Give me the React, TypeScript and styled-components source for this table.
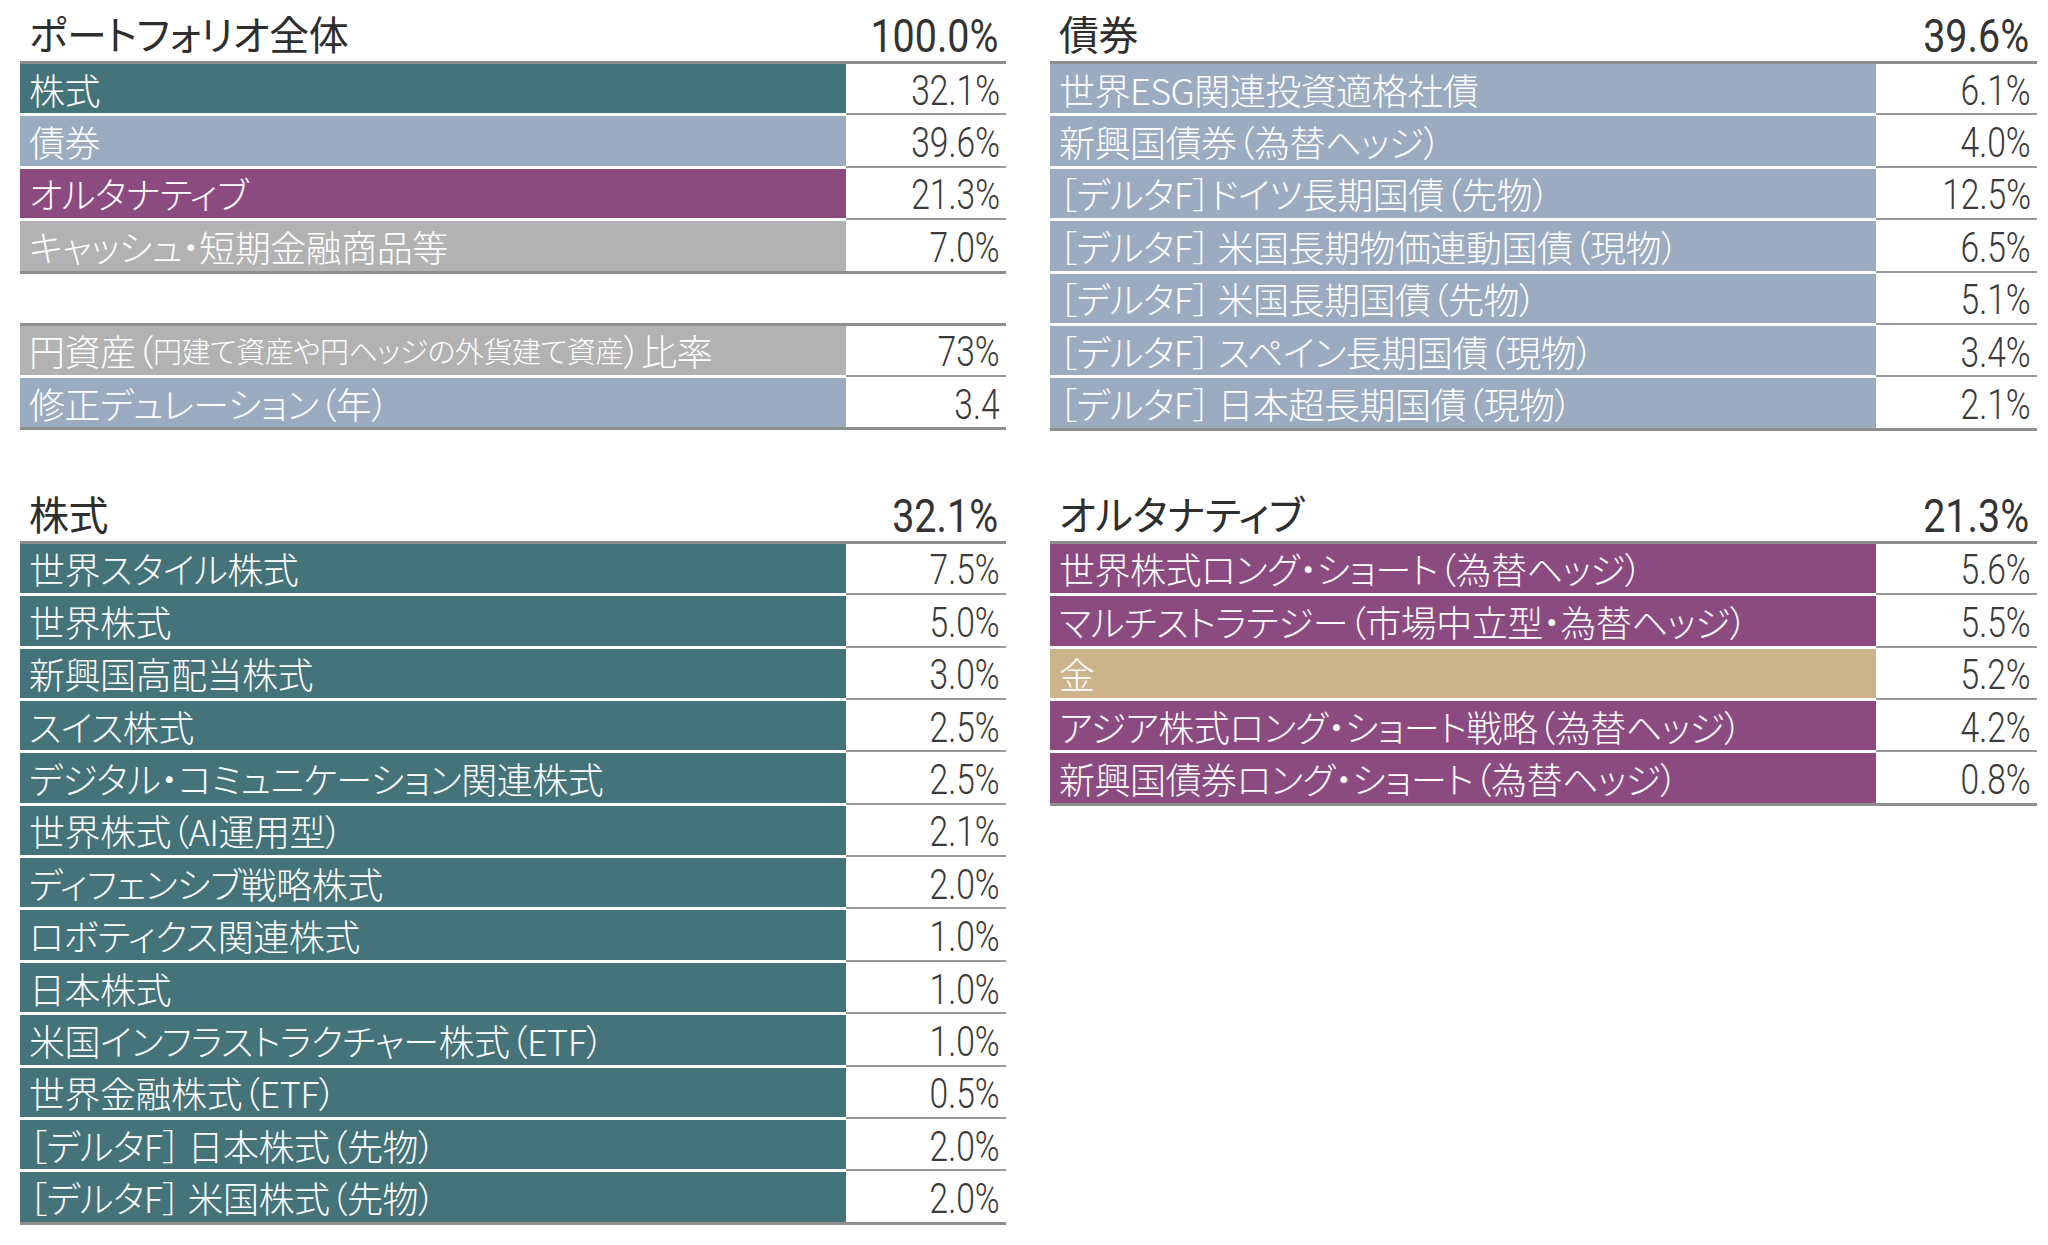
import React from 'react';
import styled, { createGlobalStyle } from 'styled-components';

const GlobalStyle = createGlobalStyle`
  html, body {
    margin: 0;
    padding: 0;
    background: #ffffff;
  }
  body {
    width: 2048px;
    height: 1245px;
    overflow: hidden;
    font-family: "Noto Sans CJK JP", "Noto Sans", sans-serif;
  }
`;

type Tone = 'equity' | 'bond' | 'alt' | 'cash' | 'gold';

const toneColor: Record<Tone, string> = {
  equity: '#44737a',
  bond: '#9bacc1',
  alt: '#8c4b80',
  cash: '#b2b2b2',
  gold: '#cbb48c',
};

type Item = { label: React.ReactNode; value: string; tone: Tone };

const Page = styled.div`
  display: grid;
  grid-template-columns: 986px 987px;
  column-gap: 44px;
  row-gap: 49px;
  padding-left: 20px;
  align-items: start;
`;

const Column = styled.section`
  display: flex;
  flex-direction: column;
`;

const Header = styled.div`
  height: 61px;
  display: flex;
  justify-content: space-between;
  align-items: flex-end;
  border-bottom: 3px solid #8e8e8e;
`;

const Title = styled.div`
  font-size: 40px;
  font-weight: 400;
  line-height: 1;
  color: #2e2e2e;
  padding: 0 0 8px 9px;
  font-feature-settings: "palt";
  letter-spacing: -0.4px;
  white-space: nowrap;
`;

const Num = styled.span<{ $big?: boolean }>`
  display: inline-block;
  font-family: Roboto, "Liberation Sans", sans-serif;
  font-weight: 300;
  font-size: ${(p) => (p.$big ? '47px' : '42px')};
  line-height: 1;
  transform: scaleX(${(p) => (p.$big ? 0.84 : 0.8)});
  transform-origin: right center;
  white-space: nowrap;
`;

const Total = styled.div`
  color: #333333;
  padding: 0 8px 2px 0;
  ${Num} {
    font-weight: 400;
  }
`;

const Table = styled.div<{ $framed?: boolean }>`
  display: flex;
  flex-direction: column;
  border-bottom: 3px solid #8e8e8e;
  ${(p) => (p.$framed ? 'border-top: 3px solid #8e8e8e; margin-top: 49px;' : '')}
`;

const Label = styled.div<{ $tone: Tone }>`
  display: flex;
  align-items: center;
  background: ${(p) => toneColor[p.$tone]};
  background-clip: padding-box;
  border-bottom: 3px solid #ffffff;
  padding-left: 9px;
  font-size: 36px;
  font-weight: 300;
  line-height: 1;
  color: #ffffff;
  white-space: nowrap;
  overflow: hidden;
  font-feature-settings: "palt";
  letter-spacing: -0.5px;
`;

const Value = styled.div`
  display: flex;
  align-items: center;
  justify-content: flex-end;
  border-bottom: 2px solid #999999;
  margin-bottom: 1px;
  padding: 4px 6px 0 0;
  color: #3a3a3a;
`;

const Row = styled.div`
  display: grid;
  grid-template-columns: 826px 1fr;
  height: 52.4px;

  &:last-child {
    height: 49.4px;
  }
  &:last-child > ${Label} {
    border-bottom: none;
  }
  &:last-child > ${Value} {
    border-bottom: none;
    margin-bottom: 0;
  }
`;

const Note = styled.span`
  font-size: 29px;
`;

const portfolio: Item[] = [
  { label: '株式', value: '32.1%', tone: 'equity' },
  { label: '債券', value: '39.6%', tone: 'bond' },
  { label: 'オルタナティブ', value: '21.3%', tone: 'alt' },
  { label: 'キャッシュ・短期金融商品等', value: '7.0%', tone: 'cash' },
];

const metrics: Item[] = [
  {
    label: (
      <>
        円資産（<Note>円建て資産や円ヘッジの外貨建て資産</Note>）比率
      </>
    ),
    value: '73%',
    tone: 'cash',
  },
  { label: '修正デュレーション（年）', value: '3.4', tone: 'bond' },
];

const bonds: Item[] = [
  { label: '世界ESG関連投資適格社債', value: '6.1%', tone: 'bond' },
  { label: '新興国債券（為替ヘッジ）', value: '4.0%', tone: 'bond' },
  { label: '［デルタF］ドイツ長期国債（先物）', value: '12.5%', tone: 'bond' },
  { label: '［デルタF］ 米国長期物価連動国債（現物）', value: '6.5%', tone: 'bond' },
  { label: '［デルタF］ 米国長期国債（先物）', value: '5.1%', tone: 'bond' },
  { label: '［デルタF］ スペイン長期国債（現物）', value: '3.4%', tone: 'bond' },
  { label: '［デルタF］ 日本超長期国債（現物）', value: '2.1%', tone: 'bond' },
];

const equities: Item[] = [
  { label: '世界スタイル株式', value: '7.5%', tone: 'equity' },
  { label: '世界株式', value: '5.0%', tone: 'equity' },
  { label: '新興国高配当株式', value: '3.0%', tone: 'equity' },
  { label: 'スイス株式', value: '2.5%', tone: 'equity' },
  { label: 'デジタル・コミュニケーション関連株式', value: '2.5%', tone: 'equity' },
  { label: '世界株式（AI運用型）', value: '2.1%', tone: 'equity' },
  { label: 'ディフェンシブ戦略株式', value: '2.0%', tone: 'equity' },
  { label: 'ロボティクス関連株式', value: '1.0%', tone: 'equity' },
  { label: '日本株式', value: '1.0%', tone: 'equity' },
  { label: '米国インフラストラクチャー株式（ETF）', value: '1.0%', tone: 'equity' },
  { label: '世界金融株式（ETF）', value: '0.5%', tone: 'equity' },
  { label: '［デルタF］ 日本株式（先物）', value: '2.0%', tone: 'equity' },
  { label: '［デルタF］ 米国株式（先物）', value: '2.0%', tone: 'equity' },
];

const alternatives: Item[] = [
  { label: '世界株式ロング・ショート（為替ヘッジ）', value: '5.6%', tone: 'alt' },
  { label: 'マルチストラテジー（市場中立型・為替ヘッジ）', value: '5.5%', tone: 'alt' },
  { label: '金', value: '5.2%', tone: 'gold' },
  { label: 'アジア株式ロング・ショート戦略（為替ヘッジ）', value: '4.2%', tone: 'alt' },
  { label: '新興国債券ロング・ショート（為替ヘッジ）', value: '0.8%', tone: 'alt' },
];

const Rows: React.FC<{ items: Item[]; framed?: boolean }> = ({ items, framed }) => (
  <Table $framed={framed}>
    {items.map((it, i) => (
      <Row key={i}>
        <Label $tone={it.tone}>{it.label}</Label>
        <Value>
          <Num>{it.value}</Num>
        </Value>
      </Row>
    ))}
  </Table>
);

const Block: React.FC<{ title: string; total: string; items: Item[]; children?: React.ReactNode }> = ({
  title,
  total,
  items,
  children,
}) => (
  <Column>
    <Header>
      <Title>{title}</Title>
      <Total>
        <Num $big>{total}</Num>
      </Total>
    </Header>
    <Rows items={items} />
    {children}
  </Column>
);

export default function App() {
  return (
    <>
      <GlobalStyle />
      <Page>
        <Block title="ポートフォリオ全体" total="100.0%" items={portfolio}>
          <Rows items={metrics} framed />
        </Block>
        <Block title="債券" total="39.6%" items={bonds} />
        <Block title="株式" total="32.1%" items={equities} />
        <Block title="オルタナティブ" total="21.3%" items={alternatives} />
      </Page>
    </>
  );
}
